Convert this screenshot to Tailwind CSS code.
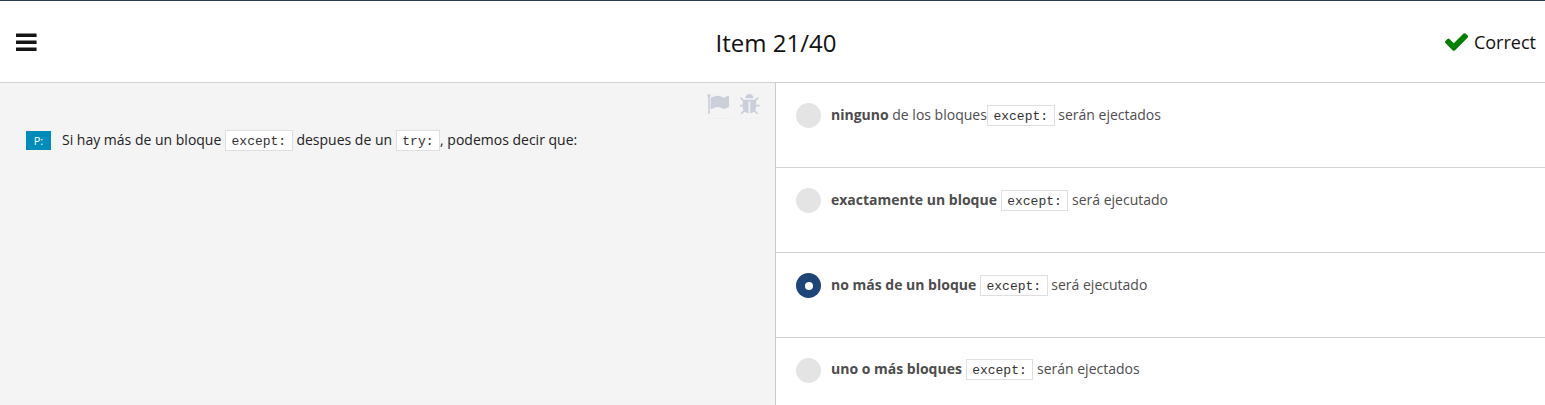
<!DOCTYPE html>
<html lang="es">
<head>
<meta charset="utf-8">
<title>Item 21/40</title>
<script src="https://cdn.jsdelivr.net/npm/@tailwindcss/browser@4"></script>
</head>
<body class="flex h-screen flex-col overflow-hidden bg-white font-['Open_Sans',sans-serif] text-sm text-[#111]">
<header class="grid h-[83px] shrink-0 grid-cols-3 items-center border-t border-b border-t-[#2c3e50] border-b-[#d2d2d2] pr-[9px] pl-4">
  <button aria-label="Menu" class="mt-px h-[18px] w-[21px]">
    <svg class="block" width="21" height="18" viewBox="0 0 21 18" fill="#151515"><rect y=".6" width="20.6" height="3.4" rx=".3"/><rect y="7.6" width="20.6" height="3.4" rx=".3"/><rect y="14.5" width="20.6" height="3.5" rx=".3"/></svg>
  </button>
  <h1 class="pt-[3px] text-center text-2xl">Item 21/40</h1>
  <div class="flex items-center justify-end gap-[5.5px] text-lg">
    <svg width="23" height="18" viewBox="121 334 1550 1188" fill="#008000"><path d="M1671 566q0 40-28 68l-724 724-136 136q-28 28-68 28t-68-28l-136-136-362-362q-28-28-28-68t28-68l136-136q28-28 68-28t68 28l294 295 656-657q28-28 68-28t68 28l136 136q28 28 28 68z"/></svg>
    <span>Correct</span>
  </div>
</header>
<main class="flex min-h-0 flex-1">
  <section class="w-[776px] shrink-0 border-r border-[#cacaca] bg-[#f4f4f4]">
    <div class="flex h-9 items-end justify-end gap-[7px] pr-[15px]">
      <span class="flex h-[25px] w-[26px] border-b border-dotted border-[#e9ebee]"><svg width="22" height="20" viewBox="32 128 1760 1536" preserveAspectRatio="none" fill="#cacfda"><path d="M320 256q0 72-64 110v1266q0 13-9.5 22.5t-22.5 9.5h-64q-13 0-22.5-9.5t-9.5-22.5v-1266q-64-38-64-110 0-53 37.5-90.5t90.5-37.5 90.5 37.5 37.5 90.5zm1472 64v763q0 25-12.5 38.5t-39.5 27.5q-215 116-369 116-61 0-123.5-22t-108.5-48-115.5-48-142.5-22q-192 0-464 146-17 9-33 9-26 0-45-19t-19-45v-742q0-32 31-55 21-14 79-43 236-120 421-120 107 0 200 29t219 88q38 19 88 19 54 0 117.5-21t110-47 88-47 54.5-21q26 0 45 19t19 45z"/></svg></span>
      <span class="flex h-[25px] w-5 border-b border-dotted border-[#e9ebee]"><svg width="20" height="20" viewBox="128 64 1504 1536" fill="#cacfda"><path d="M1632 960q0 26-19 45t-45 19h-224q0 171-67 290l208 209q19 19 19 45t-19 45q-18 19-45 19t-45-19l-198-197q-5 5-15 13t-42 28.5-65 36.5-82 29-97 13v-896h-128v896q-51 0-101.500-13.500t-87-33-66-39-43.500-32.500l-15-14-183 207q-20 21-48 21-24 0-43-16-19-18-20.500-44.500t15.500-46.500l202-227q-58-114-58-274h-224q-26 0-45-19t-19-45 19-45 45-19h224v-294l-173-173q-19-19-19-45t19-45 45-19 45 19l173 173h844l173-173q19-19 45-19t45 19 19 45-19 45l-173 173v294h224q26 0 45 19t19 45zm-480-576h-640q0-133 93.500-226.500t226.500-93.500 226.500 93.500 93.500 226.500z"/></svg></span>
    </div>
    <div class="flex items-center pt-[10px] pl-[26px]">
      <span class="-mt-px flex h-[19px] w-[25px] items-center justify-center bg-[#008cba] text-[11px] text-white">P:</span>
      <p class="ml-[11px] leading-[22px] text-[#222]">Si hay más de un bloque <code class="border border-[#dfdfdf] bg-white px-[5.6px] pt-[3px] pb-px font-['Courier_New','Liberation_Mono',monospace] text-[13px] text-[#333]">except:</code> despues de un <code class="border border-[#dfdfdf] bg-white px-[5.6px] pt-[3px] pb-px font-['Courier_New','Liberation_Mono',monospace] text-[13px] text-[#333]">try:</code>, podemos decir que:</p>
    </div>
  </section>
  <section class="min-w-0 flex-1 text-[#4d4d4d]">
    <div class="flex h-[85px] border-b border-[#d2d2d2] pt-5 pl-5">
      <span class="size-[25px] rounded-full bg-[#e4e4e4]"></span>
      <p class="ml-[10px] leading-[24px]"><b>ninguno</b> de los bloques<code class="border border-[#dfdfdf] bg-white px-[5.6px] pt-[3px] pb-px font-['Courier_New','Liberation_Mono',monospace] text-[13px] text-[#333]">except:</code> serán ejectados</p>
    </div>
    <div class="flex h-[85px] border-b border-[#d2d2d2] pt-5 pl-5">
      <span class="size-[25px] rounded-full bg-[#e4e4e4]"></span>
      <p class="ml-[10px] leading-[24px]"><b>exactamente un bloque</b> <code class="border border-[#dfdfdf] bg-white px-[5.6px] pt-[3px] pb-px font-['Courier_New','Liberation_Mono',monospace] text-[13px] text-[#333]">except:</code> será ejecutado</p>
    </div>
    <div class="flex h-[85px] border-b border-[#d2d2d2] pt-5 pl-5">
      <span class="flex size-[25px] items-center justify-center rounded-full bg-[#1f4478]"><span class="mt-px ml-px size-2 rounded-full bg-white"></span></span>
      <p class="ml-[10px] leading-[24px]"><b>no más de un bloque</b> <code class="border border-[#dfdfdf] bg-white px-[5.6px] pt-[3px] pb-px font-['Courier_New','Liberation_Mono',monospace] text-[13px] text-[#333]">except:</code> será ejecutado</p>
    </div>
    <div class="flex h-[85px] pt-5 pl-5">
      <span class="size-[25px] rounded-full bg-[#e4e4e4]"></span>
      <p class="ml-[10px] leading-[22px]"><b>uno o más bloques</b> <code class="border border-[#dfdfdf] bg-white px-[5.6px] pt-[3px] pb-px font-['Courier_New','Liberation_Mono',monospace] text-[13px] text-[#333]">except:</code> serán ejectados</p>
    </div>
  </section>
</main>
</body>
</html>
